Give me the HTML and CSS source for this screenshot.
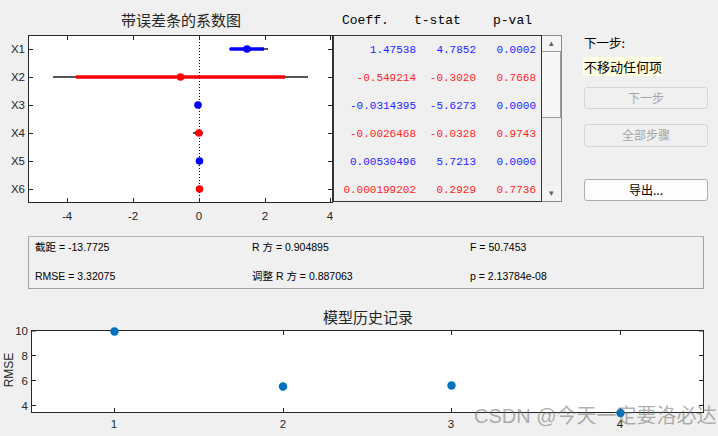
FILE: index.html
```html
<!DOCTYPE html>
<html lang="zh">
<head>
    <meta charset="UTF-8">
    <title>逐步回归</title>
    <link rel="stylesheet" href="styles.css">
</head>
<body>
<div class="page">
    <div class="top">
        <!-- 带误差条的系数图 -->
        <svg class="coef-plot" viewBox="0 0 333 230" width="333" height="230">
            <text class="ttl" x="181" y="26">带误差条的系数图</text>
            <rect x="28.5" y="35.5" width="304" height="167" fill="#fff" stroke="#262626"/>
            <line x1="199.5" y1="36" x2="199.5" y2="202" stroke="#000" stroke-dasharray="1 2"/>
            <g class="ticks">
                <path d="M67.5 202v-4M133.5 202v-4M199.5 202v-4M265.5 202v-4M330.5 202v-4"/>
                <path d="M67.5 36v4M133.5 36v4M199.5 36v4M265.5 36v4M330.5 36v4"/>
                <path d="M29 49.5h4M29 77.5h4M29 105.5h4M29 133.5h4M29 161.5h4M29 189.5h4"/>
                <path d="M332 49.5h-4M332 77.5h-4M332 105.5h-4M332 133.5h-4M332 161.5h-4M332 189.5h-4"/>
            </g>
            <g class="lbl">
                <text x="67" y="220">-4</text>
                <text x="133" y="220">-2</text>
                <text x="199" y="220">0</text>
                <text x="265" y="220">2</text>
                <text x="330" y="220">4</text>
            </g>
            <g class="lbl ylbl">
                <text x="25" y="53">X1</text>
                <text x="25" y="81">X2</text>
                <text x="25" y="109">X3</text>
                <text x="25" y="137">X4</text>
                <text x="25" y="165">X5</text>
                <text x="25" y="193">X6</text>
            </g>
            <!-- 误差条 -->
            <g class="bar-out">
                <line x1="229" y1="49" x2="268" y2="49"/>
                <line x1="53" y1="77" x2="308" y2="77"/>
                <line x1="193" y1="133" x2="203" y2="133"/>
            </g>
            <line class="bar-in blue" x1="230" y1="49" x2="264" y2="49"/>
            <line class="bar-in red" x1="76" y1="77" x2="285" y2="77"/>
            <line class="bar-in red" x1="195" y1="133" x2="202" y2="133"/>
            <circle class="dot blue" cx="247" cy="49" r="3.8"/>
            <circle class="dot red" cx="180.5" cy="77" r="3.8"/>
            <circle class="dot blue" cx="198" cy="105" r="3.8"/>
            <circle class="dot red" cx="199" cy="133" r="3.8"/>
            <circle class="dot blue" cx="199.5" cy="161" r="3.8"/>
            <circle class="dot red" cx="199.5" cy="189" r="3.8"/>
        </svg>

        <div class="tbl-area">
            <div class="tbl-head">
                <span>Coeff.</span>
                <span>t-stat</span>
                <span>p-val</span>
            </div>
            <div class="tbl-wrap">
                <div class="tbl">
                    <span class="c-blue">1.47538</span><span class="c-blue">4.7852</span><span class="c-blue">0.0002</span>
                    <span class="c-red">-0.549214</span><span class="c-red">-0.3020</span><span class="c-red">0.7668</span>
                    <span class="c-blue">-0.0314395</span><span class="c-blue">-5.6273</span><span class="c-blue">0.0000</span>
                    <span class="c-red">-0.0026468</span><span class="c-red">-0.0328</span><span class="c-red">0.9743</span>
                    <span class="c-blue">0.00530496</span><span class="c-blue">5.7213</span><span class="c-blue">0.0000</span>
                    <span class="c-red">0.000199202</span><span class="c-red">0.2929</span><span class="c-red">0.7736</span>
                </div>
                <div class="scroll">
                    <div class="sb-btn">&#9652;</div>
                    <div class="sb-thumb"></div>
                    <div class="sb-track"></div>
                    <div class="sb-btn">&#9662;</div>
                </div>
            </div>
        </div>

        <div class="side">
            <div class="step-lbl">下一步:</div>
            <div class="step-val">不移动任何项</div>
            <div class="btn btn-off">下一步</div>
            <div class="btn btn-off btn-2">全部步骤</div>
            <div class="btn btn-exp">导出...</div>
        </div>
    </div>

    <div class="stats">
        <span>截距 = -13.7725</span>
        <span>R 方 = 0.904895</span>
        <span>F = 50.7453</span>
        <span>RMSE = 3.32075</span>
        <span>调整 R 方 = 0.887063</span>
        <span>p = 2.13784e-08</span>
    </div>

    <!-- 模型历史记录 -->
    <svg class="hist-plot" viewBox="0 296 718 140" width="718" height="140">
        <text class="ttl" x="368" y="323">模型历史记录</text>
        <rect x="31.5" y="330.5" width="672" height="82" fill="#fff" stroke="#262626"/>
        <g class="ticks">
            <path d="M114.5 412v-4M283.5 412v-4M451.5 412v-4M620.5 412v-4"/>
            <path d="M114.5 331v4M283.5 331v4M451.5 331v4M620.5 331v4"/>
            <path d="M32 331h4M32 355.5h4M32 380.5h4M32 405.5h4"/>
            <path d="M703 331h-4M703 355.5h-4M703 380.5h-4M703 405.5h-4"/>
        </g>
        <g class="lbl ylbl">
            <text x="28" y="335">10</text>
            <text x="28" y="360">8</text>
            <text x="28" y="385">6</text>
            <text x="28" y="410">4</text>
        </g>
        <g class="lbl">
            <text x="114" y="428">1</text>
            <text x="283" y="428">2</text>
            <text x="451" y="428">3</text>
            <text x="620" y="428">4</text>
        </g>
        <text class="lbl rmse" x="0" y="0" transform="translate(13 370) rotate(-90)">RMSE</text>
        <g class="hist-dot">
            <circle cx="114.5" cy="331.5" r="4.2"/>
            <circle cx="283" cy="386.5" r="4.2"/>
            <circle cx="451.5" cy="385.5" r="4.2"/>
            <circle cx="620.5" cy="413" r="4.2"/>
        </g>
    </svg>

    <div class="watermark">CSDN @今天一定要洛必达</div>
</div>
</body>
</html>
```

FILE: styles.css
```css
body{
    margin: 0;
    background-color: #f0f0f0;
    font-family: "Liberation Sans", "Noto Sans CJK SC", sans-serif;
    color: #000;
}
.page{
    position: relative;
    width: 718px;
    height: 436px;
    overflow: hidden;
}
.top{
    display: flex;
    height: 230px;
}
.coef-plot,
.hist-plot{
    display: block;
}
.ttl{
    font-family: "Noto Sans CJK SC", sans-serif;
    font-size: 15px;
    fill: #262626;
    text-anchor: middle;
}
.ticks path{
    stroke: #262626;
    stroke-width: 1;
    fill: none;
}
.lbl text,
.lbl{
    font-family: "Liberation Sans", sans-serif;
    font-size: 11.5px;
    fill: #262626;
    text-anchor: middle;
}
.ylbl text{
    text-anchor: end;
}
.rmse{
    font-size: 12px;
}
.bar-out line{
    stroke: #555;
    stroke-width: 2;
}
.bar-in{
    stroke-width: 3.5;
}
.bar-in.blue{
    stroke: #0000ff;
}
.bar-in.red{
    stroke: #ff0000;
}
.dot.blue{
    fill: #0000ff;
}
.dot.red{
    fill: #ff0000;
}
.hist-dot circle{
    fill: #0072bd;
}

/* 系数表 */
.tbl-area{
    width: 229px;
}
.tbl-head{
    display: grid;
    grid-template-columns: 72px 79px auto;
    padding: 12px 0 0 9px;
    height: 23px;
    font-family: "Liberation Mono", monospace;
    font-size: 13px;
    line-height: 18px;
    color: #000;
}
.tbl-wrap{
    display: flex;
    height: 167px;
}
.tbl{
    display: grid;
    grid-template-columns: 82px 60px 60px;
    grid-auto-rows: 28px;
    align-content: start;
    width: 207px;
    border: 1px solid #333;
    border-left-width: 2px;
    margin-left: -1px;
    font-family: "Liberation Mono", monospace;
    font-size: 11px;
    line-height: 28px;
    text-align: right;
}
.c-blue{
    color: #2424ff;
}
.c-red{
    color: #ff2424;
}
.scroll{
    display: flex;
    flex-direction: column;
    width: 19px;
    border: 1px solid #8a8a8a;
    border-left: none;
    background-color: #f0f0f0;
}
.sb-btn{
    height: 15px;
    font-size: 9px;
    line-height: 15px;
    text-align: center;
    color: #606060;
    background-color: #f4f4f4;
}
.sb-thumb{
    height: 65px;
    border: 1px solid #9a9a9a;
    border-left: none;
    background-color: #f7f7f7;
}
.sb-track{
    flex: 1;
}

/* 右侧 */
.side{
    width: 124px;
    margin-left: 22px;
    padding-top: 34px;
    font-family: "Noto Sans CJK SC", sans-serif;
}
.step-lbl{
    font-size: 12.5px;
    line-height: 18px;
}
.step-val{
    display: inline-block;
    margin: 5px 0 0 -1px;
    padding: 0 1px;
    font-size: 13px;
    line-height: 19px;
    background-color: #ffffe1;
}
.btn{
    box-sizing: border-box;
    height: 22px;
    margin-top: 10px;
    border: 1px solid #d6d6d6;
    border-radius: 3px;
    font-size: 12px;
    line-height: 20px;
    text-align: center;
}
.btn-off{
    color: #a6a6a6;
    background-color: #f0f0f0;
}
.btn-2{
    height: 23px;
    margin-top: 15px;
}
.btn-exp{
    margin-top: 32px;
    border-color: #adadad;
    background-color: #fdfdfd;
}

/* 统计量 */
.stats{
    display: grid;
    grid-template-columns: 217px 218px 1fr;
    row-gap: 8px;
    box-sizing: border-box;
    width: 676px;
    height: 53px;
    margin: 6px 0 0 28px;
    padding: 2px 0 0 6px;
    border: 1px solid #a0a0a0;
    border-top-color: #b4b4b4;
    font-size: 10.5px;
    line-height: 16px;
}

.hist-plot{
    margin-top: 7px;
}
.watermark{
    position: absolute;
    left: 474px;
    top: 403px;
    font-family: "Liberation Sans", "Noto Sans CJK SC", sans-serif;
    font-size: 20px;
    line-height: 26px;
    color: rgba(110, 110, 110, 0.55);
    white-space: nowrap;
}
```
